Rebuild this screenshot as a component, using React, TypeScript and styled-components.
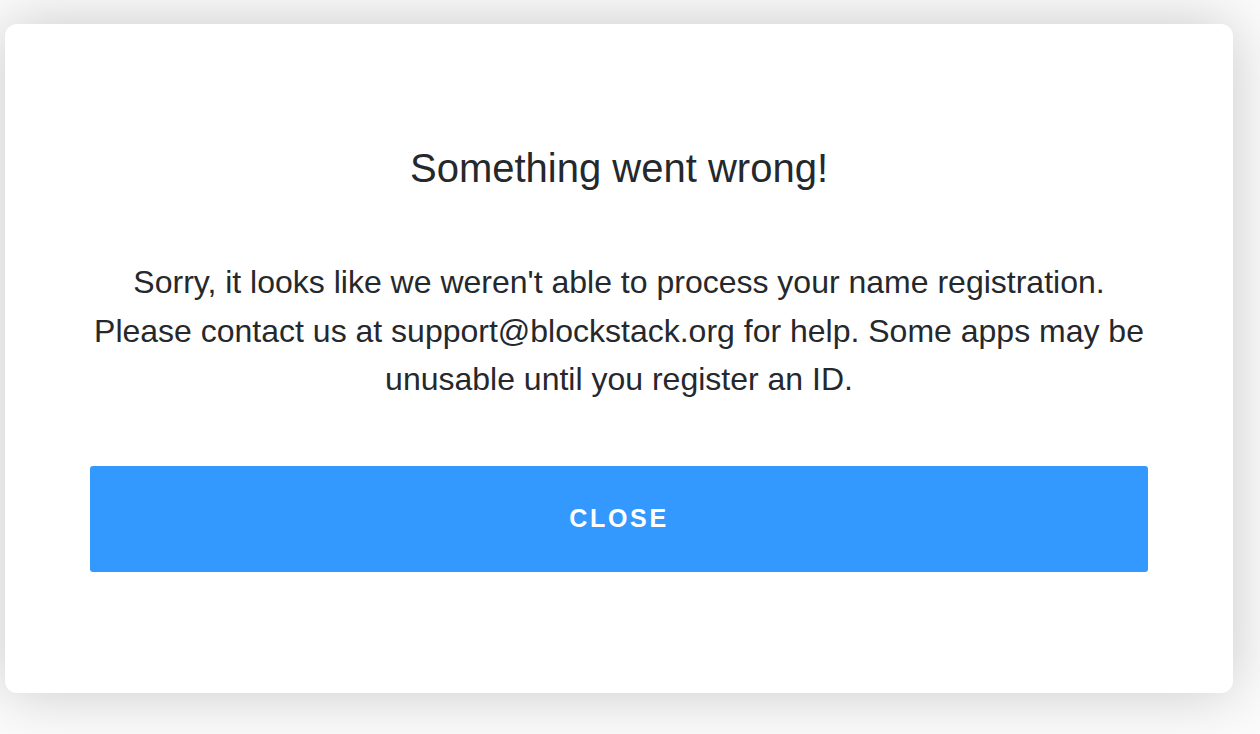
import styled, { createGlobalStyle } from "styled-components";

const GlobalStyle = createGlobalStyle`
  html, body {
    margin: 0;
    padding: 0;
    background: #fbfbfb;
  }

  body {
    font-family: "Liberation Sans", Arial, sans-serif;
    color: #25282c;
  }
`;

const Page = styled.div`
  width: 1260px;
  height: 734px;
  box-sizing: border-box;
  padding: 24px 27px 41px 5px;
  background: #fbfbfb;
  overflow: hidden;
`;

const Card = styled.div`
  box-sizing: border-box;
  height: 669px;
  background: #ffffff;
  border-radius: 12px;
  box-shadow: 0 0 60px rgba(0, 0, 0, 0.2);
  padding: 122px 85px 0;
  display: flex;
  flex-direction: column;
  align-items: stretch;
`;

const Title = styled.h2`
  margin: 0;
  font-size: 40px;
  font-weight: 400;
  line-height: 44px;
  text-align: center;
  color: #25282c;
`;

const Message = styled.p`
  margin: 68px 0 0;
  font-size: 32px;
  line-height: 48.5px;
  text-align: center;
  color: #25282c;
`;

const CloseButton = styled.button`
  margin-top: 62px;
  height: 106px;
  border: none;
  border-radius: 3px;
  background: #3499ff;
  color: #ffffff;
  font-family: "Liberation Sans", Arial, sans-serif;
  font-size: 25px;
  font-weight: 700;
  letter-spacing: 2.7px;
  text-transform: uppercase;
  cursor: pointer;
`;

export default function App() {
  return (
    <>
      <GlobalStyle />
      <Page>
        <Card>
          <Title>Something went wrong!</Title>
          <Message>
            Sorry, it looks like we weren't able to process your name registration.
            <br />
            Please contact us at support@blockstack.org for help. Some apps may be
            unusable until you register an ID.
          </Message>
          <CloseButton>Close</CloseButton>
        </Card>
      </Page>
    </>
  );
}
